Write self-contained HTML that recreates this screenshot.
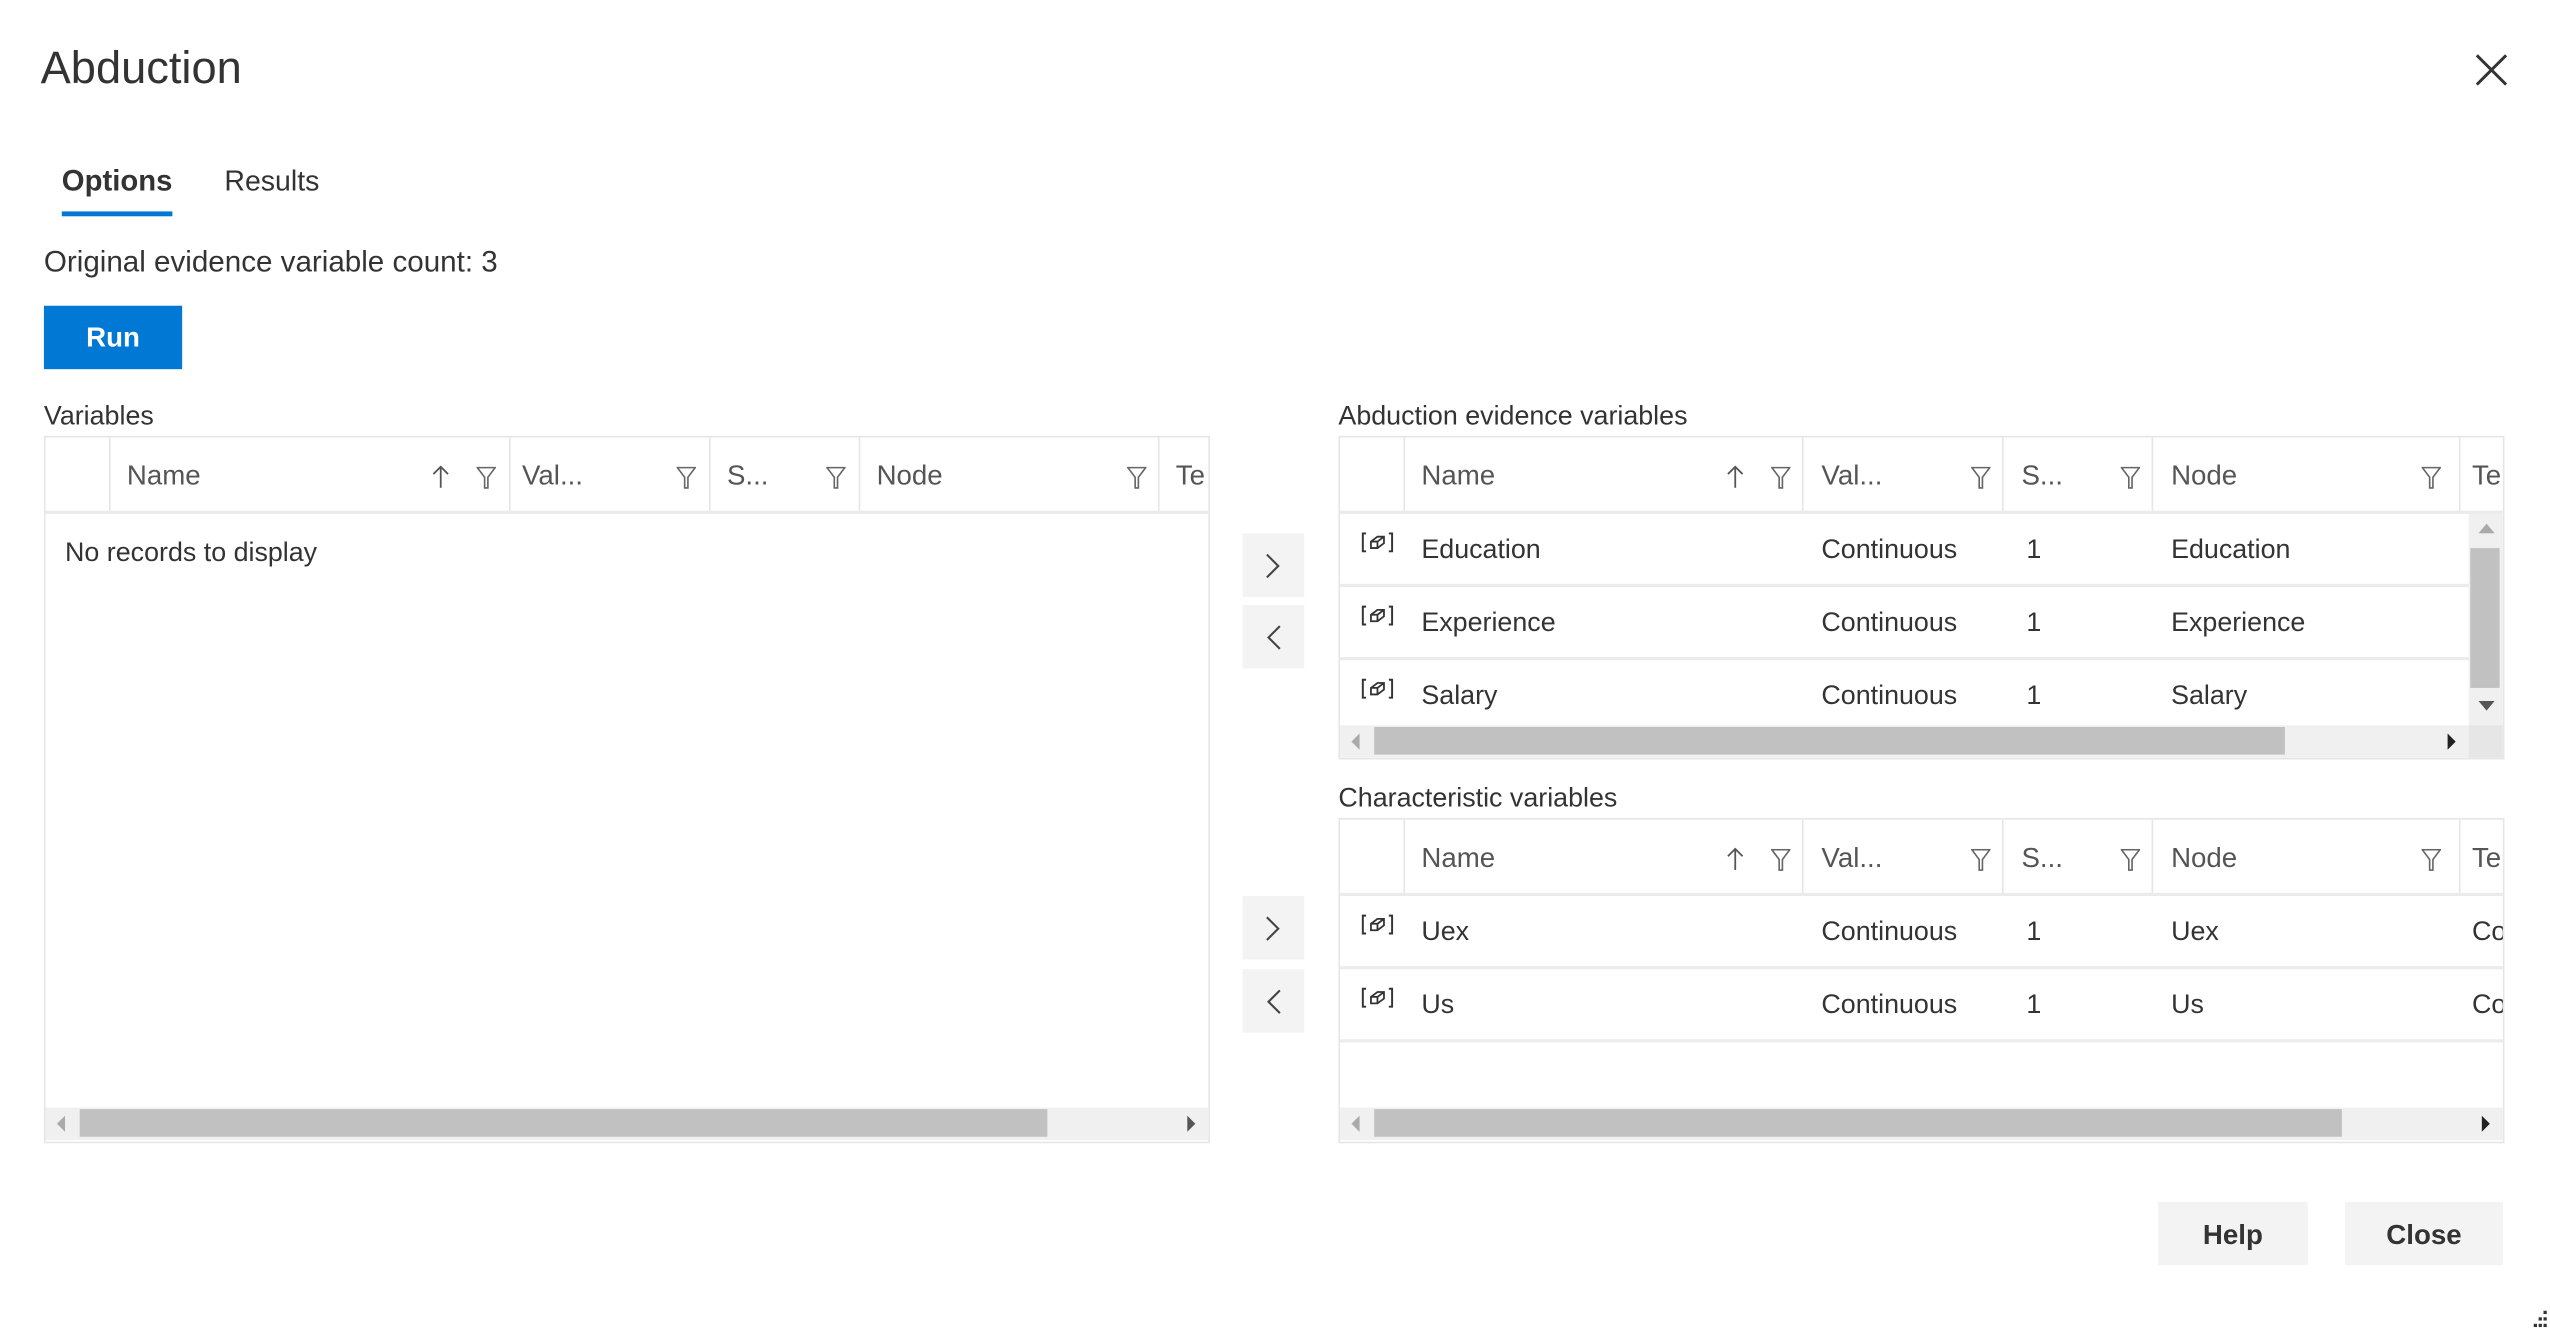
<!DOCTYPE html>
<html><head><meta charset="utf-8">
<style>
html,body{margin:0;padding:0;background:#fff;overflow:hidden;width:2550px;height:1330px}
#w{position:absolute;left:0;top:0;width:1568px;height:818px;transform:scale(1.62628);transform-origin:0 0;font-family:"Liberation Sans",sans-serif;color:#333}
.a{position:absolute;white-space:nowrap}
.t{font-size:16.5px;line-height:20px}
.grid{position:absolute;border:1px solid #e6e6e6;background:#fff;overflow:hidden}
.hd{position:absolute;left:0;right:0;top:0;height:45px;border-bottom:2px solid #ebebeb}
.vl{position:absolute;top:0;height:45px;width:1px;background:#e6e6e6}
.ht{position:absolute;top:14px;font-size:17px;color:#555;line-height:20px}
.row{position:absolute;left:0;right:0;height:44px;border-bottom:2px solid #ececec}
.ct{position:absolute;top:13px;font-size:16.5px;line-height:20px;color:#333}
.hs{position:absolute;background:#f0f0f0}
.th{position:absolute;background:#c1c1c1}
.btn{position:absolute;background:#f3f3f3}
.ic{position:absolute;top:12px;left:13px}
</style></head><body><div id="w">
<div class="a" style="left:25px;top:26px;font-size:27.8px;line-height:32px;color:#333">Abduction</div>
<svg class="a" style="left:1520px;top:31px" width="24" height="24" viewBox="0 0 24 24"><path d="M3 3L21 21M21 3L3 21" stroke="#333" stroke-width="1.8"/></svg>
<div class="a" style="left:38px;top:101px;font-size:18px;font-weight:bold;line-height:20px">Options</div>
<div class="a" style="left:38px;top:130px;width:68px;height:3px;background:#0078d4"></div>
<div class="a" style="left:138px;top:101px;font-size:17.5px;line-height:20px">Results</div>
<div class="a" style="left:27px;top:151px;font-size:18.2px;line-height:20px">Original evidence variable count: 3</div>
<div class="a" style="left:27px;top:188px;width:85px;height:39px;background:#0078d4;color:#fff;font-weight:bold;font-size:17px;line-height:39px;text-align:center">Run</div>
<div class="a t" style="left:27px;top:246px">Variables</div>
<div class="a t" style="left:823px;top:246px">Abduction evidence variables</div>
<div class="a t" style="left:823px;top:481px">Characteristic variables</div>

<!-- left grid -->
<div class="grid" style="left:27px;top:268px;width:715px;height:433px">
 <div class="hd">
  <div class="vl" style="left:39px"></div><div class="vl" style="left:285px"></div><div class="vl" style="left:408px"></div><div class="vl" style="left:500px"></div><div class="vl" style="left:684px"></div>
  <div class="ht" style="left:50px">Name</div><div class="ht" style="left:293px">Val...</div><div class="ht" style="left:419px">S...</div><div class="ht" style="left:511px">Node</div><div class="ht" style="left:695px">Te</div>
  <svg class="a" style="left:237px;top:17px" width="12" height="14"><path d="M6 1V14M1.5 5.5L6 1L10.5 5.5" stroke="#555" fill="none" stroke-width="1.1"/></svg>
  <svg class="a" style="left:265px;top:18px" width="12" height="14"><path d="M0.5 0.5H11.5L7 6.5V13H5V6.5Z" stroke="#666" fill="none"/></svg>
  <svg class="a" style="left:388px;top:18px" width="12" height="14"><path d="M0.5 0.5H11.5L7 6.5V13H5V6.5Z" stroke="#666" fill="none"/></svg>
  <svg class="a" style="left:480px;top:18px" width="12" height="14"><path d="M0.5 0.5H11.5L7 6.5V13H5V6.5Z" stroke="#666" fill="none"/></svg>
  <svg class="a" style="left:665px;top:18px" width="12" height="14"><path d="M0.5 0.5H11.5L7 6.5V13H5V6.5Z" stroke="#666" fill="none"/></svg>
 </div>
 <div class="a t" style="left:12px;top:61px">No records to display</div>
 <div class="hs" style="left:0;top:412px;width:715px;height:20px">
  <svg class="a" style="left:7px;top:5px" width="6" height="10"><path d="M5 0V10L0 5Z" fill="#aaa"/></svg>
  <div class="th" style="left:21px;top:1px;width:595px;height:17px"></div>
  <svg class="a" style="left:702px;top:5px" width="6" height="10"><path d="M0 0V10L5 5Z" fill="#555"/></svg>
 </div>
</div>

<!-- arrow buttons -->
<div class="btn" style="left:764px;top:328px;width:38px;height:39px"><svg class="a" style="left:13px;top:12px" width="12" height="16"><path d="M2 1L9 8L2 15" stroke="#444" fill="none" stroke-width="1.3"/></svg></div>
<div class="btn" style="left:764px;top:372px;width:38px;height:39px"><svg class="a" style="left:13px;top:12px" width="12" height="16"><path d="M10 1L3 8L10 15" stroke="#444" fill="none" stroke-width="1.3"/></svg></div>
<div class="btn" style="left:764px;top:551px;width:38px;height:39px"><svg class="a" style="left:13px;top:12px" width="12" height="16"><path d="M2 1L9 8L2 15" stroke="#444" fill="none" stroke-width="1.3"/></svg></div>
<div class="btn" style="left:764px;top:596px;width:38px;height:39px"><svg class="a" style="left:13px;top:12px" width="12" height="16"><path d="M10 1L3 8L10 15" stroke="#444" fill="none" stroke-width="1.3"/></svg></div>

<!-- right grid 1 -->
<div class="grid" style="left:823px;top:268px;width:715px;height:197px">
 <div class="hd">
  <div class="vl" style="left:39px"></div><div class="vl" style="left:284px"></div><div class="vl" style="left:407px"></div><div class="vl" style="left:499px"></div><div class="vl" style="left:688px"></div>
  <div class="ht" style="left:50px">Name</div><div class="ht" style="left:296px">Val...</div><div class="ht" style="left:419px">S...</div><div class="ht" style="left:511px">Node</div><div class="ht" style="left:696px">Te</div>
  <svg class="a" style="left:237px;top:17px" width="12" height="14"><path d="M6 1V14M1.5 5.5L6 1L10.5 5.5" stroke="#555" fill="none" stroke-width="1.1"/></svg>
  <svg class="a" style="left:265px;top:18px" width="12" height="14"><path d="M0.5 0.5H11.5L7 6.5V13H5V6.5Z" stroke="#666" fill="none"/></svg>
  <svg class="a" style="left:388px;top:18px" width="12" height="14"><path d="M0.5 0.5H11.5L7 6.5V13H5V6.5Z" stroke="#666" fill="none"/></svg>
  <svg class="a" style="left:480px;top:18px" width="12" height="14"><path d="M0.5 0.5H11.5L7 6.5V13H5V6.5Z" stroke="#666" fill="none"/></svg>
  <svg class="a" style="left:665px;top:18px" width="12" height="14"><path d="M0.5 0.5H11.5L7 6.5V13H5V6.5Z" stroke="#666" fill="none"/></svg>
 </div>
 <div class="row" style="top:46px;right:21px">
  <svg class="ic" width="20" height="14" viewBox="0 0 20 14"><path d="M3 1H1V12H3M17 1H19V12H17" stroke="#333" fill="none" stroke-width="1.2"/><path d="M6 6L10 3H14V7L10 10H6Z M6 6H10V10 M10 6L14 3" stroke="#333" fill="none" stroke-width="1.1"/></svg>
  <div class="ct" style="left:50px">Education</div><div class="ct" style="left:296px">Continuous</div><div class="ct" style="left:422px">1</div><div class="ct" style="left:511px">Education</div></div>
 <div class="row" style="top:91px;right:21px">
  <svg class="ic" width="20" height="14" viewBox="0 0 20 14"><path d="M3 1H1V12H3M17 1H19V12H17" stroke="#333" fill="none" stroke-width="1.2"/><path d="M6 6L10 3H14V7L10 10H6Z M6 6H10V10 M10 6L14 3" stroke="#333" fill="none" stroke-width="1.1"/></svg>
  <div class="ct" style="left:50px">Experience</div><div class="ct" style="left:296px">Continuous</div><div class="ct" style="left:422px">1</div><div class="ct" style="left:511px">Experience</div></div>
 <div class="row" style="top:136px;right:21px;border:none">
  <svg class="ic" width="20" height="14" viewBox="0 0 20 14"><path d="M3 1H1V12H3M17 1H19V12H17" stroke="#333" fill="none" stroke-width="1.2"/><path d="M6 6L10 3H14V7L10 10H6Z M6 6H10V10 M10 6L14 3" stroke="#333" fill="none" stroke-width="1.1"/></svg>
  <div class="ct" style="left:50px">Salary</div><div class="ct" style="left:296px">Continuous</div><div class="ct" style="left:422px">1</div><div class="ct" style="left:511px">Salary</div></div>
 <div class="hs" style="left:694px;top:47px;width:21px;height:150px">
  <svg class="a" style="left:6px;top:6px" width="10" height="6"><path d="M0 6H10L5 0Z" fill="#aaa"/></svg>
  <div class="th" style="left:1px;top:21px;width:18px;height:86px"></div>
  <svg class="a" style="left:6px;top:115px" width="10" height="6"><path d="M0 0H10L5 6Z" fill="#555"/></svg>
 </div>
 <div class="hs" style="left:0;top:177px;width:694px;height:20px">
  <svg class="a" style="left:7px;top:5px" width="6" height="10"><path d="M5 0V10L0 5Z" fill="#aaa"/></svg>
  <div class="th" style="left:21px;top:1px;width:560px;height:17px"></div>
  <svg class="a" style="left:681px;top:5px" width="6" height="10"><path d="M0 0V10L5 5Z" fill="#222"/></svg>
 </div>
 <div class="a" style="left:694px;top:177px;width:21px;height:20px;background:#e6e6e6"></div>
</div>

<!-- right grid 2 -->
<div class="grid" style="left:823px;top:503px;width:715px;height:198px">
 <div class="hd">
  <div class="vl" style="left:39px"></div><div class="vl" style="left:284px"></div><div class="vl" style="left:407px"></div><div class="vl" style="left:499px"></div><div class="vl" style="left:688px"></div>
  <div class="ht" style="left:50px">Name</div><div class="ht" style="left:296px">Val...</div><div class="ht" style="left:419px">S...</div><div class="ht" style="left:511px">Node</div><div class="ht" style="left:696px">Te</div>
  <svg class="a" style="left:237px;top:17px" width="12" height="14"><path d="M6 1V14M1.5 5.5L6 1L10.5 5.5" stroke="#555" fill="none" stroke-width="1.1"/></svg>
  <svg class="a" style="left:265px;top:18px" width="12" height="14"><path d="M0.5 0.5H11.5L7 6.5V13H5V6.5Z" stroke="#666" fill="none"/></svg>
  <svg class="a" style="left:388px;top:18px" width="12" height="14"><path d="M0.5 0.5H11.5L7 6.5V13H5V6.5Z" stroke="#666" fill="none"/></svg>
  <svg class="a" style="left:480px;top:18px" width="12" height="14"><path d="M0.5 0.5H11.5L7 6.5V13H5V6.5Z" stroke="#666" fill="none"/></svg>
  <svg class="a" style="left:665px;top:18px" width="12" height="14"><path d="M0.5 0.5H11.5L7 6.5V13H5V6.5Z" stroke="#666" fill="none"/></svg>
 </div>
 <div class="row" style="top:46px">
  <svg class="ic" width="20" height="14" viewBox="0 0 20 14"><path d="M3 1H1V12H3M17 1H19V12H17" stroke="#333" fill="none" stroke-width="1.2"/><path d="M6 6L10 3H14V7L10 10H6Z M6 6H10V10 M10 6L14 3" stroke="#333" fill="none" stroke-width="1.1"/></svg>
  <div class="ct" style="left:50px">Uex</div><div class="ct" style="left:296px">Continuous</div><div class="ct" style="left:422px">1</div><div class="ct" style="left:511px">Uex</div><div class="ct" style="left:696px">Co</div></div>
 <div class="row" style="top:91px">
  <svg class="ic" width="20" height="14" viewBox="0 0 20 14"><path d="M3 1H1V12H3M17 1H19V12H17" stroke="#333" fill="none" stroke-width="1.2"/><path d="M6 6L10 3H14V7L10 10H6Z M6 6H10V10 M10 6L14 3" stroke="#333" fill="none" stroke-width="1.1"/></svg>
  <div class="ct" style="left:50px">Us</div><div class="ct" style="left:296px">Continuous</div><div class="ct" style="left:422px">1</div><div class="ct" style="left:511px">Us</div><div class="ct" style="left:696px">Co</div></div>
 <div class="hs" style="left:0;top:177px;width:715px;height:20px">
  <svg class="a" style="left:7px;top:5px" width="6" height="10"><path d="M5 0V10L0 5Z" fill="#aaa"/></svg>
  <div class="th" style="left:21px;top:1px;width:595px;height:17px"></div>
  <svg class="a" style="left:702px;top:5px" width="6" height="10"><path d="M0 0V10L5 5Z" fill="#222"/></svg>
 </div>
</div>

<div class="btn" style="left:1327px;top:739px;width:92px;height:39px;font-weight:bold;font-size:17px;line-height:41px;text-align:center">Help</div>
<div class="btn" style="left:1442px;top:739px;width:97px;height:39px;font-weight:bold;font-size:17px;line-height:41px;text-align:center">Close</div>
<svg class="a" style="left:1554px;top:804px" width="14" height="14"><g fill="#333"><rect x="10" y="2" width="2" height="2"/><rect x="7" y="6" width="2" height="2"/><rect x="10" y="6" width="2" height="2"/><rect x="4" y="10" width="2" height="2"/><rect x="7" y="10" width="2" height="2"/><rect x="10" y="10" width="2" height="2"/></g></svg>
</div></body></html>
